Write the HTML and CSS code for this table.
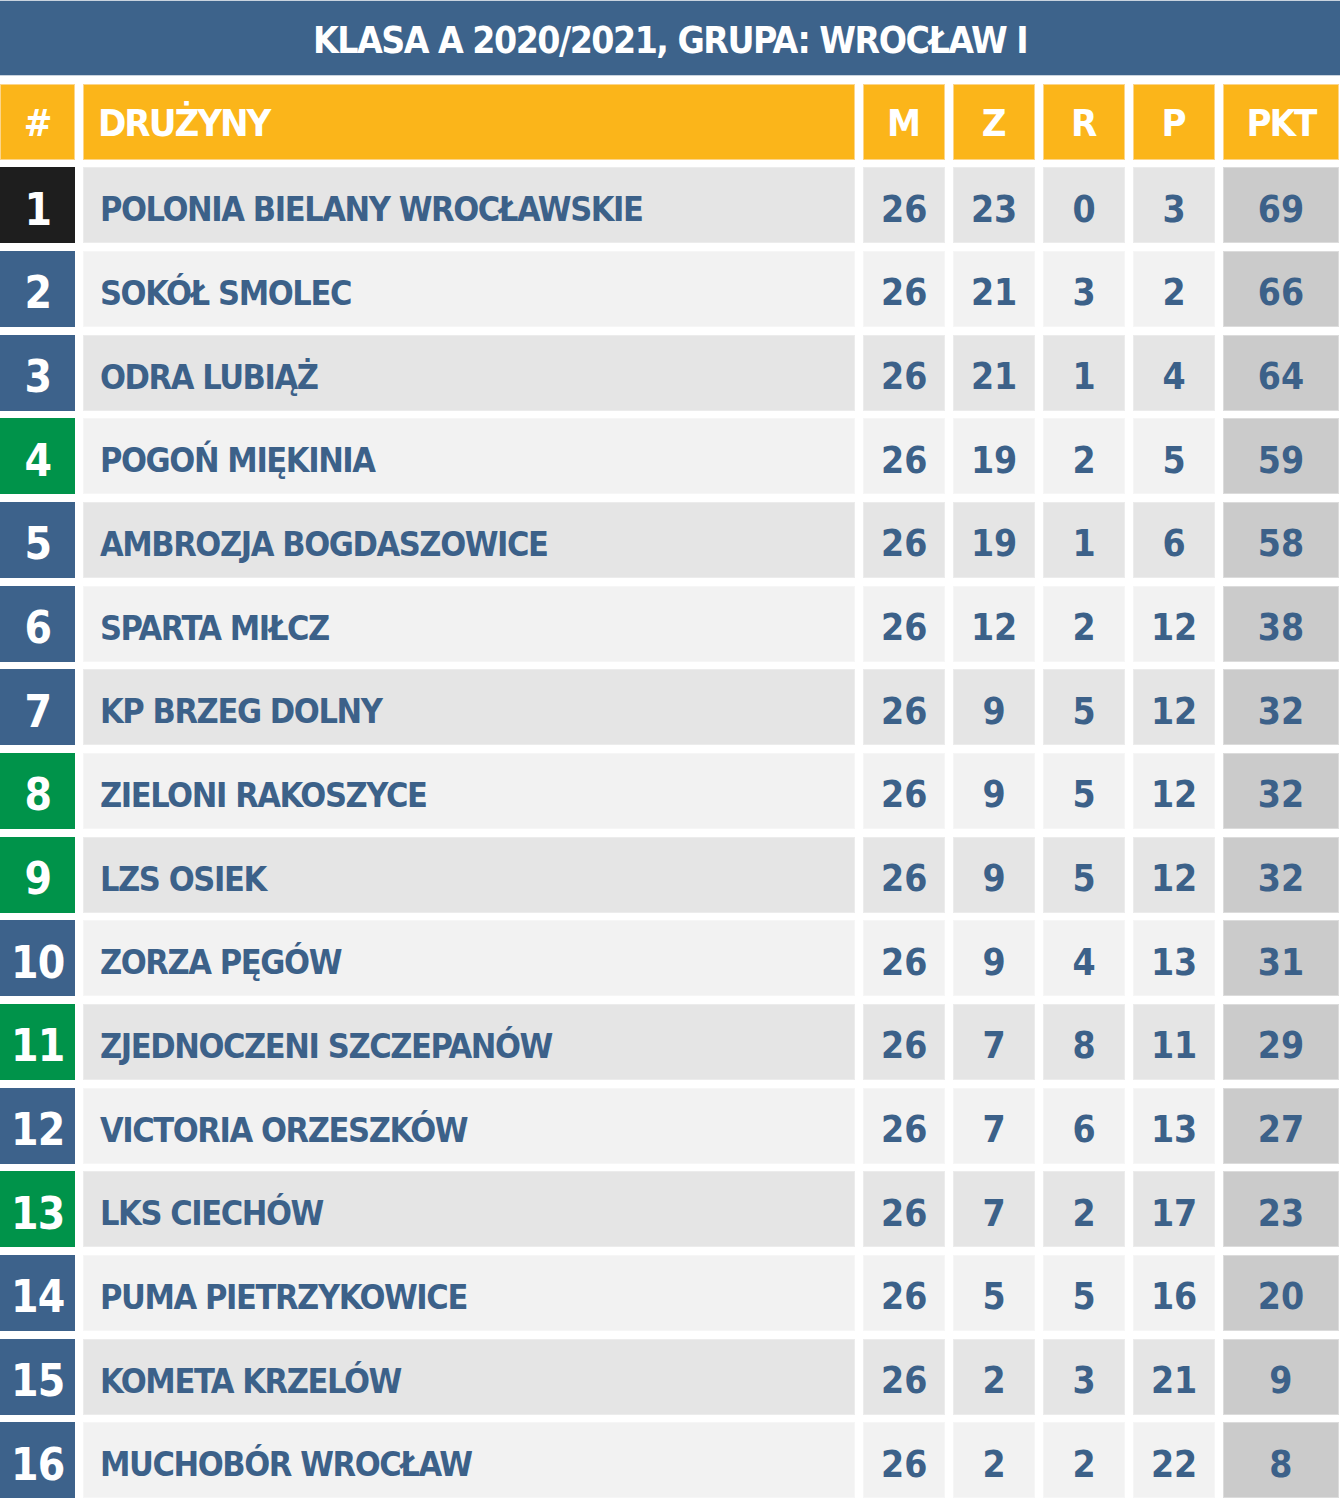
FILE: index.html
```html
<!DOCTYPE html>
<html lang="pl">
<head>
<meta charset="utf-8">
<title>Klasa A 2020/2021, Grupa: Wrocław I</title>
<link rel="stylesheet" href="styles.css">
</head>
<body>
<div class="board">
  <div class="title">KLASA A 2020/2021, GRUPA: WROCŁAW I</div>
  <div class="table">
    <div class="h rank">#</div><div class="h team">DRUŻYNY</div><div class="h">M</div><div class="h">Z</div><div class="h">R</div><div class="h">P</div><div class="h tight">PKT</div>

    <div class="rank black">1</div><div class="c odd team">POLONIA BIELANY WROCŁAWSKIE</div><div class="c odd">26</div><div class="c odd">23</div><div class="c odd">0</div><div class="c odd">3</div><div class="c pkt">69</div>
    <div class="rank blue">2</div><div class="c even team">SOKÓŁ SMOLEC</div><div class="c even">26</div><div class="c even">21</div><div class="c even">3</div><div class="c even">2</div><div class="c pkt">66</div>
    <div class="rank blue">3</div><div class="c odd team">ODRA LUBIĄŻ</div><div class="c odd">26</div><div class="c odd">21</div><div class="c odd">1</div><div class="c odd">4</div><div class="c pkt">64</div>
    <div class="rank green">4</div><div class="c even team">POGOŃ MIĘKINIA</div><div class="c even">26</div><div class="c even">19</div><div class="c even">2</div><div class="c even">5</div><div class="c pkt">59</div>
    <div class="rank blue">5</div><div class="c odd team">AMBROZJA BOGDASZOWICE</div><div class="c odd">26</div><div class="c odd">19</div><div class="c odd">1</div><div class="c odd">6</div><div class="c pkt">58</div>
    <div class="rank blue">6</div><div class="c even team">SPARTA MIŁCZ</div><div class="c even">26</div><div class="c even">12</div><div class="c even">2</div><div class="c even">12</div><div class="c pkt">38</div>
    <div class="rank blue">7</div><div class="c odd team">KP BRZEG DOLNY</div><div class="c odd">26</div><div class="c odd">9</div><div class="c odd">5</div><div class="c odd">12</div><div class="c pkt">32</div>
    <div class="rank green">8</div><div class="c even team">ZIELONI RAKOSZYCE</div><div class="c even">26</div><div class="c even">9</div><div class="c even">5</div><div class="c even">12</div><div class="c pkt">32</div>
    <div class="rank green">9</div><div class="c odd team">LZS OSIEK</div><div class="c odd">26</div><div class="c odd">9</div><div class="c odd">5</div><div class="c odd">12</div><div class="c pkt">32</div>
    <div class="rank blue">10</div><div class="c even team">ZORZA PĘGÓW</div><div class="c even">26</div><div class="c even">9</div><div class="c even">4</div><div class="c even">13</div><div class="c pkt">31</div>
    <div class="rank green">11</div><div class="c odd team">ZJEDNOCZENI SZCZEPANÓW</div><div class="c odd">26</div><div class="c odd">7</div><div class="c odd">8</div><div class="c odd">11</div><div class="c pkt">29</div>
    <div class="rank blue">12</div><div class="c even team">VICTORIA ORZESZKÓW</div><div class="c even">26</div><div class="c even">7</div><div class="c even">6</div><div class="c even">13</div><div class="c pkt">27</div>
    <div class="rank green">13</div><div class="c odd team">LKS CIECHÓW</div><div class="c odd">26</div><div class="c odd">7</div><div class="c odd">2</div><div class="c odd">17</div><div class="c pkt">23</div>
    <div class="rank blue">14</div><div class="c even team">PUMA PIETRZYKOWICE</div><div class="c even">26</div><div class="c even">5</div><div class="c even">5</div><div class="c even">16</div><div class="c pkt">20</div>
    <div class="rank blue">15</div><div class="c odd team">KOMETA KRZELÓW</div><div class="c odd">26</div><div class="c odd">2</div><div class="c odd">3</div><div class="c odd">21</div><div class="c pkt">9</div>
    <div class="rank blue">16</div><div class="c even team">MUCHOBÓR WROCŁAW</div><div class="c even">26</div><div class="c even">2</div><div class="c even">2</div><div class="c even">22</div><div class="c pkt">8</div>
  </div>
</div>
</body>
</html>
```
FILE: styles.css
```css
html, body {
  margin: 0;
  padding: 0;
  background: #ffffff;
}
body {
  font-family: "DejaVu Sans Condensed", "Liberation Sans", sans-serif;
  font-weight: bold;
  width: 1340px;
}
.board {
  display: flex;
  flex-direction: column;
  gap: 7.67px;
}
.title {
  height: 76px;
  background: #3d638b;
  box-shadow: inset 0 1px 0 #c9d3de, inset 0 -1px 0 #c9d3de;
  color: #ffffff;
  font-size: 37px;
  letter-spacing: -1.5px;
  display: flex;
  align-items: center;
  justify-content: center;
  padding-top: 4px;
  box-sizing: border-box;
}
.table {
  display: grid;
  grid-template-columns: 75.33px 772.33px 82.33px 82.33px 82.33px 82.33px 116px;
  grid-auto-rows: 76px;
  gap: 7.67px;
}
.table > div {
  display: flex;
  align-items: center;
  justify-content: center;
  box-sizing: border-box;
  padding-top: 8px;
}
.h {
  background: #fbb51a;
  color: #ffffff;
  font-size: 38px;
  box-shadow: inset 0 0 0 1px #fcd58a;
  padding-top: 2px !important;
}
.h.team {
  justify-content: flex-start;
  padding-left: 15px;
  letter-spacing: -2px;
}
.h.tight {
  letter-spacing: -2px;
}
.rank {
  color: #ffffff;
  font-size: 44px;
  letter-spacing: -1px;
}
.h.rank {
  font-size: 38px;
}
.black { background: #1e1e1e; }
.blue { background: #3d628b; }
.green { background: #00934a; }
.c {
  color: #3c6189;
  font-size: 37px;
}
.odd { background: #e5e5e5; box-shadow: inset 0 0 0 1px #ececec; }
.even { background: #f2f2f2; box-shadow: inset 0 0 0 1px #f6f6f6; }
.pkt { background: #cbcbcb; box-shadow: inset 0 0 0 1px #dcdcdc; }
.c.team {
  justify-content: flex-start;
  padding-left: 17px;
  font-size: 34px;
  letter-spacing: -1.4px;
}
```
